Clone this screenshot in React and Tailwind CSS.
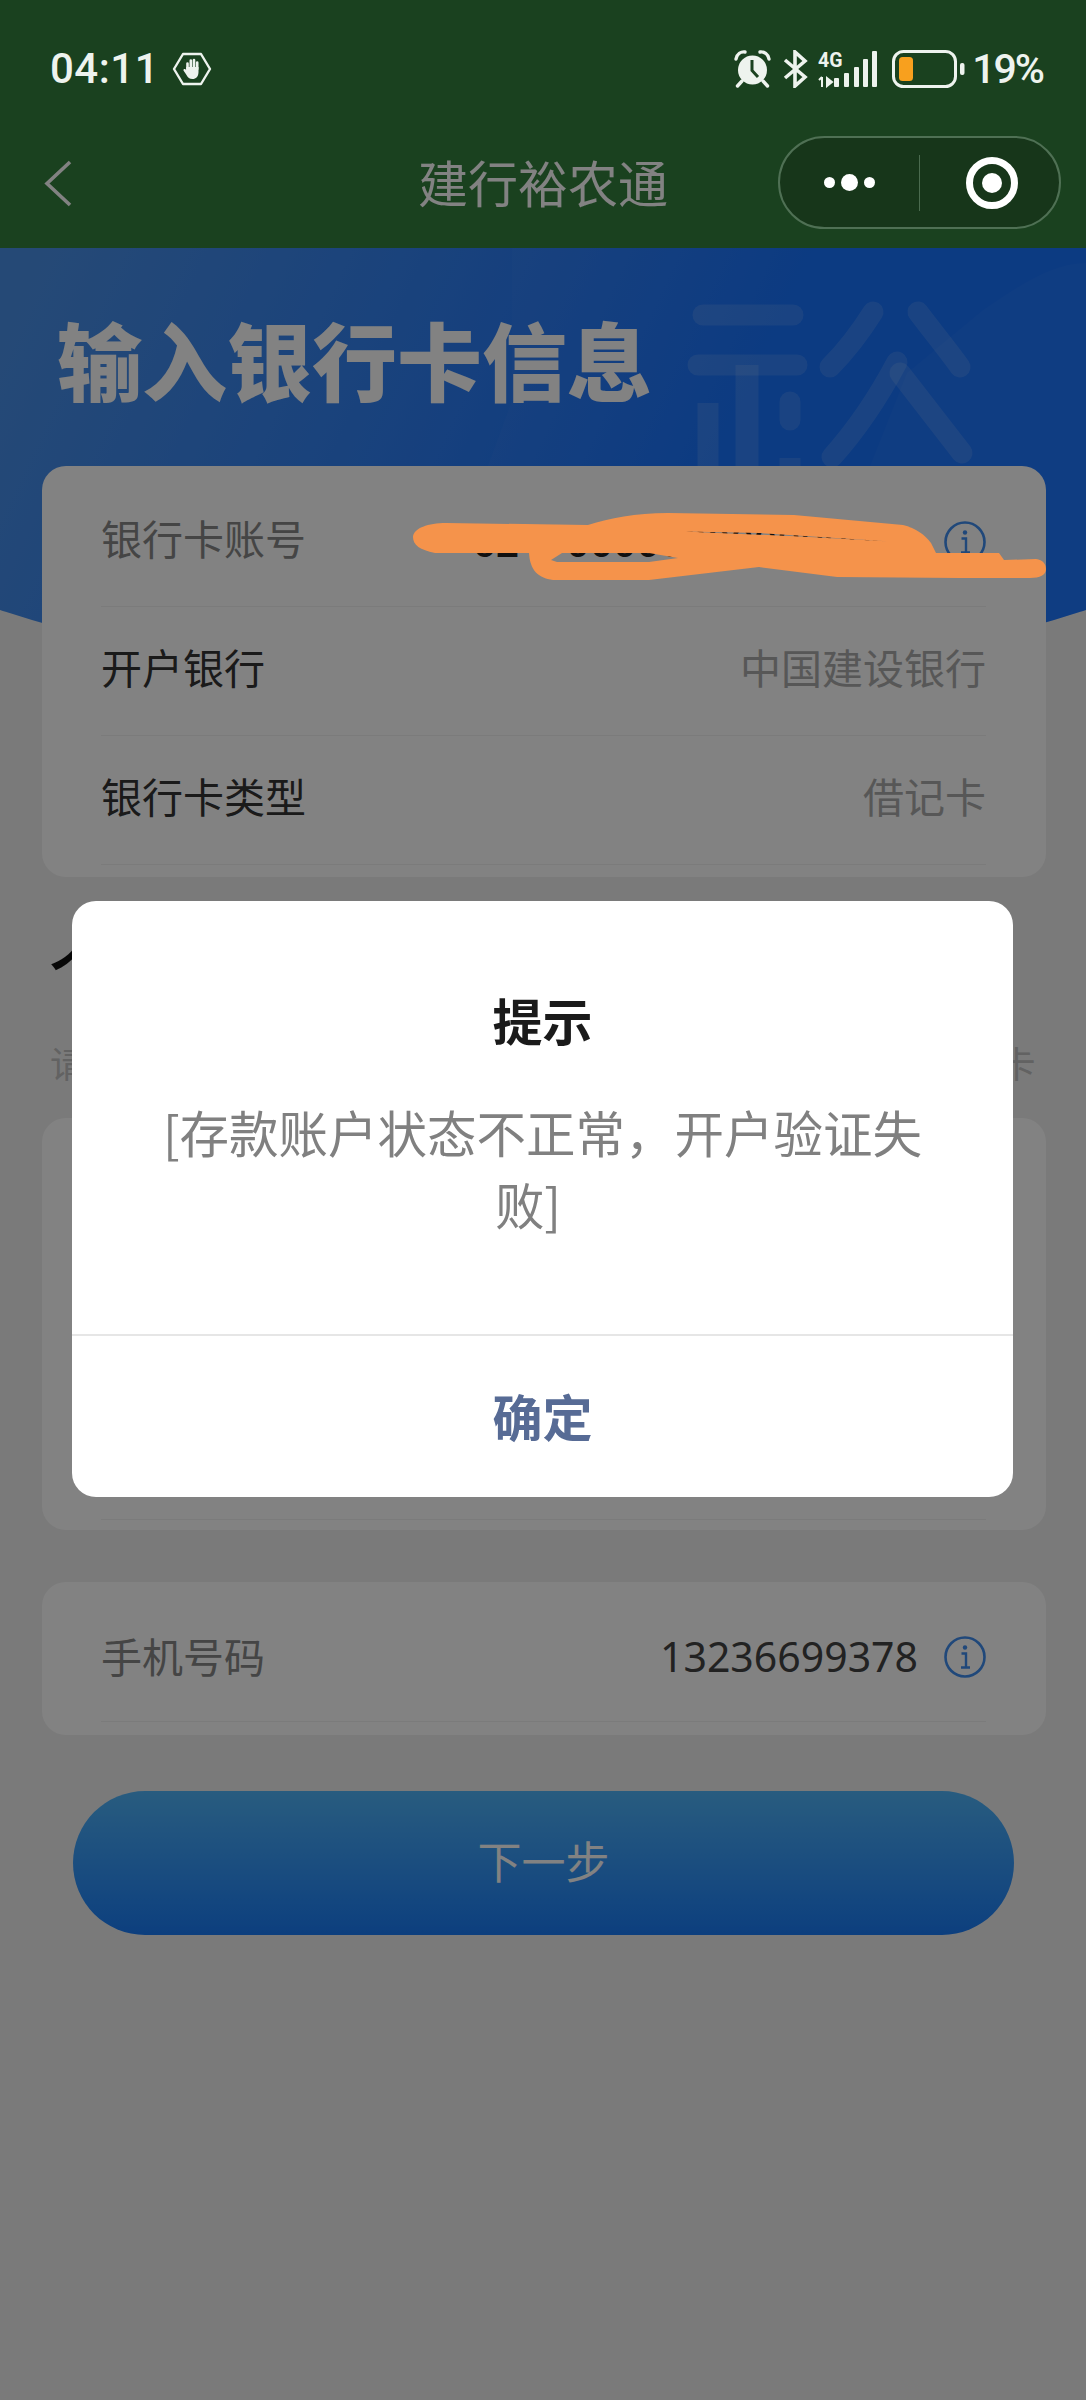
import React from "react";

const cjk = { fontFamily: '"Noto Sans CJK SC", "Noto Sans", sans-serif' };

const InfoIcon = () => (
  <svg width="42" height="42" viewBox="0 0 42 42" fill="none" className="ml-[26px] shrink-0">
    <circle cx="21" cy="21" r="19.5" stroke="#3f8df0" strokeWidth="2.6" />
    <circle cx="21" cy="11.5" r="2.2" fill="#3f8df0" />
    <path d="M17.5 17.5H22V31M17 31.5H26" stroke="#3f8df0" strokeWidth="2.4" />
  </svg>
);

const Row = ({ label, dark, lift, children }) => (
  <div className="flex items-center justify-between h-[129px] border-b border-[#f2f2f2]">
    <span className={`text-[41px] ${dark ? "text-[#333333]" : "text-[#888888]"} ${lift ? "mb-[8px]" : "mb-[2px]"}`}>{label}</span>
    {children}
  </div>
);

const StatusBar = () => (
  <div className="relative z-20 flex items-center justify-between h-[116px] pl-[50px] pr-[43px] pt-[22px] text-[#eef3ee]">
    <div className="flex items-center">
      <span
        className="text-[42px] font-medium leading-none tracking-[0.5px]"
        style={{ fontFamily: "Roboto, sans-serif" }}
      >
        04:11
      </span>
      {/* hand badge */}
      <svg width="40" height="34" viewBox="0 0 40 34" fill="none" className="ml-[13px]">
        <path d="M11 2H29L38 17L29 32H11L2 17Z" stroke="#eef3ee" strokeWidth="2.4" strokeLinejoin="round" />
        <path d="M15.5 17V11.5M18.8 16V8.5M22 16V8M25.2 17V10.5" stroke="#eef3ee" strokeWidth="2.6" strokeLinecap="round" />
        <path
          d="M14.2 15H26.5V20C26.5 24.5 24 27 20.5 27C17.5 27 15.8 25.5 14.5 23L11.5 18.5C11 17.3 12.6 16.4 13.6 17.4L14.2 18Z"
          fill="#eef3ee"
        />
      </svg>
    </div>
    <div className="flex items-center">
      {/* alarm */}
      <svg width="37" height="38" viewBox="0 0 37 38" fill="none">
        <circle cx="18.5" cy="20" r="14.5" fill="#eef3ee" />
        <path d="M18 10V20.5L24 27" stroke="#1b4220" strokeWidth="3" />
        <path d="M2 9C3 4 7 1.5 11 2M35 9C34 4 30 1.5 26 2" stroke="#eef3ee" strokeWidth="3.4" strokeLinecap="round" />
        <path d="M8 31L3.5 36M29 31L33.5 36" stroke="#eef3ee" strokeWidth="3.4" strokeLinecap="round" />
      </svg>
      {/* bluetooth */}
      <svg width="27" height="38" viewBox="0 0 27 38" fill="none" className="ml-[11px]">
        <path d="M3 10L23 27L13 36V2L23 11L3 28" stroke="#eef3ee" strokeWidth="3.6" strokeLinejoin="miter" />
      </svg>
      {/* network and signal */}
      <svg width="61" height="38" viewBox="0 0 61 38" className="ml-[9px]">
        <text x="0" y="17" fontSize="19.5" fontWeight="700" fill="#eef3ee" fontFamily="Roboto, sans-serif">
          4G
        </text>
        <path d="M4 27V37M1 30L4 27M9 28V36L14 32Z" stroke="#eef3ee" strokeWidth="2" fill="#eef3ee" />
        <rect x="16" y="28" width="5" height="9" rx="1" fill="#eef3ee" />
        <rect x="26" y="23" width="5" height="14" rx="1" fill="#eef3ee" />
        <rect x="36" y="17" width="5" height="20" rx="1" fill="#eef3ee" />
        <rect x="45" y="9" width="5" height="28" rx="1" fill="#eef3ee" />
        <rect x="54" y="1" width="5" height="36" rx="1" fill="#eef3ee" />
      </svg>
      {/* battery */}
      <svg width="73" height="38" viewBox="0 0 73 38" fill="none" className="ml-[13px]">
        <rect x="1.5" y="1.5" width="62" height="35" rx="10" stroke="#eef3ee" strokeWidth="3" />
        <rect x="7" y="7" width="14" height="24" rx="3.5" fill="#f8a01e" />
        <rect x="68" y="13" width="4.5" height="12" rx="2" fill="#eef3ee" />
      </svg>
      <span
        className="ml-[7px] text-[41px] font-medium leading-none tracking-[-2px]"
        style={{ fontFamily: "Roboto, sans-serif" }}
      >
        19%
      </span>
    </div>
  </div>
);

const NavBar = () => (
  <div className="relative flex items-center justify-center h-[132px] bg-[#34803e] pb-[2px]">
    <svg width="28" height="47" viewBox="0 0 28 47" fill="none" className="absolute left-[44px] top-[44px]">
      <path d="M26 2L3 23.5L26 45" stroke="#ffffff" strokeWidth="3.6" />
    </svg>
    <span className="text-[50px] text-white">建行裕农通</span>
    {/* capsule sits above the dim layer */}
    <div className="absolute z-20 right-[25px] top-[20px] flex items-center w-[283px] h-[93px] rounded-full bg-[#17361a] border-2 border-[#4f7054]">
      <div className="flex items-center justify-center gap-[6px] w-[139px]">
        <span className="w-[11px] h-[11px] rounded-full bg-white" />
        <span className="w-[17px] h-[17px] rounded-full bg-white" />
        <span className="w-[11px] h-[11px] rounded-full bg-white" />
      </div>
      <div className="w-px h-[56px] bg-[#4b6b4f]" />
      <div className="flex items-center justify-center flex-1 pl-[5px]">
        <div className="flex items-center justify-center w-[52px] h-[52px] rounded-full border-[7px] border-white">
          <span className="w-[20px] h-[20px] rounded-full bg-white" />
        </div>
      </div>
    </div>
  </div>
);

// Faint background shapes and the rounded watermark in the header
const HeaderArt = () => (
  <svg width="1520" height="437" viewBox="0 0 1520 437" fill="none" className="absolute left-0 top-0">
    <path d="M729 0V152L682 280V437H1520V0Z" fill="#ffffff" fillOpacity="0.02" />
    <path d="M1303 15C1270 15 1240 35 1200 62L1124 125L1000 437H1520V15Z" fill="#ffffff" fillOpacity="0.03" />
    <g stroke="#ffffff" strokeOpacity="0.12" strokeWidth="21" strokeLinecap="round">
      <path d="M920 67H1010" />
      <path d="M915 117H1014" />
      <path d="M964 117V240" strokeLinecap="butt" strokeWidth="23" />
      <path d="M925 155V240" strokeLinecap="butt" />
      <path d="M1007 154V172" />
      <path d="M1007 210V240" strokeLinecap="butt" />
      <path d="M1090 64C1075 88 1062 104 1047 119" />
      <path d="M1135 64C1150 84 1165 102 1177 119" />
      <path d="M1114 114C1095 150 1075 180 1049 209" />
      <path d="M1117 125L1179 205" />
      <path d="M1103 232C1115 226 1130 226 1143 232" strokeWidth="9" strokeLinecap="butt" />
    </g>
  </svg>
);

// Orange marker scribble on top of the account number
const Scribble = () => (
  <svg
    width="1086"
    height="640"
    viewBox="0 0 1086 640"
    className="absolute left-0 top-0 z-20 pointer-events-none"
  >
    <path
      fillRule="evenodd"
      fill="#f5934b"
      d="M413 537C414 528 428 523 446 523L588 525C610 518 635 513 668 513L794 515L903 525C916 528 925 535 931 543L936 553L999 553L1004 560L1036 559C1043 560 1046 564 1046 569C1046 575 1040 578 1030 578L960 578L837 577L759 567L649 580L553 580C538 578 530 570 529 553L470 553L435 553C420 550 413 545 413 537Z
      M551 560L562 553L649 553L678 558L649 562L557 562Z
      M684 531.5L760 533L890 541.5L800 536.5Z"
    />
  </svg>
);

export default function App() {
  return (
    <div className="relative w-[1086px] h-[2400px] overflow-hidden bg-[#f0f0f0]" style={cjk}>
      <div className="absolute left-0 top-0 w-full h-[116px] bg-[#34803e]" />
      <StatusBar />
      <NavBar />

      {/* blue header with curved bottom */}
      <div className="relative w-[1520px] h-[437px] -ml-[217px] pl-[274px] pt-[64px] overflow-hidden rounded-b-[50%_250px] bg-linear-115 from-[#4a90e8] from-15% to-[#1472ff] to-60%">
        <HeaderArt />
        <h1 className="relative text-[85px] leading-[92px] font-black text-white">输入银行卡信息</h1>
      </div>

      <div className="-mt-[219px] relative pl-[42px] pr-[40px]">
        {/* bank card info */}
        <div className="pl-[59px] pr-[60px] pt-[12px] pb-[12px] rounded-[24px] bg-white">
          <Row label="银行卡账号" lift>
            <div className="flex items-center">
              <span className="text-[41px] font-medium text-[#222222]" style={{ fontFamily: '"Noto Sans", sans-serif' }}>
                6217000000000000000
              </span>
              <InfoIcon />
            </div>
          </Row>
          <Row label="开户银行" dark lift>
            <span className="mb-[8px] text-[41px] text-[#ababab]">中国建设银行</span>
          </Row>
          <Row label="银行卡类型" dark lift>
            <span className="mb-[8px] text-[41px] text-[#ababab]">借记卡</span>
          </Row>
        </div>

        {/* personal info */}
        <h2 className="mt-[57px] pl-[8px] text-[52px] leading-[68px] font-bold text-[#111111]">个人信息</h2>
        <p className="mt-[36px] pl-[8px] text-[36.5px] leading-[50px] whitespace-nowrap text-[#c0c0c0]">
          请确保个人信息与银行卡开户信息一致，否则无法绑定银行卡
        </p>
        <div className="flex items-end mt-[30px] h-[412px] pl-[59px] pr-[60px] pb-[10px] rounded-[24px] bg-white">
          <div className="w-full border-b border-[#f2f2f2]" />
        </div>

        {/* phone */}
        <div className="mt-[52px] pl-[59px] pr-[60px] pt-[11px] pb-[13px] rounded-[24px] bg-white">
          <Row label="手机号码">
            <div className="flex items-center">
              <span className="text-[41px] text-[#444444]" style={{ fontFamily: '"Noto Sans", sans-serif' }}>
                13236699378
              </span>
              <InfoIcon />
            </div>
          </Row>
        </div>

        <button className="flex items-center justify-center mt-[56px] ml-[31px] w-[941px] h-[144px] pb-[6px] rounded-full text-[44px] text-white bg-linear-to-b from-[#50b4fa] to-[#1a7cf8]">
          下一步
        </button>
      </div>

      {/* dim layer */}
      <div className="absolute inset-0 z-10 bg-black/[0.49]" />
      <Scribble />

      {/* alert dialog */}
      <div className="absolute z-30 left-[72px] top-[901px] w-[941px] rounded-[24px] bg-white overflow-hidden">
        <div className="pt-[82px] px-[70px] pb-[94px] text-center">
          <div className="text-[50px] leading-[72px] font-bold text-[#1a1a1a]">提示</div>
          <div className="mt-[41px] text-[49.5px] leading-[72px] text-[#808080]">
            [存款账户状态不正常，开户验证失败]
            <span className="inline-block w-[29px]" />
          </div>
        </div>
        <div className="flex items-center justify-center h-[163px] pb-[3px] border-t-2 border-[#e6e6e6] text-[50px] font-bold text-[#576b95]">
          确定
        </div>
      </div>
    </div>
  );
}
